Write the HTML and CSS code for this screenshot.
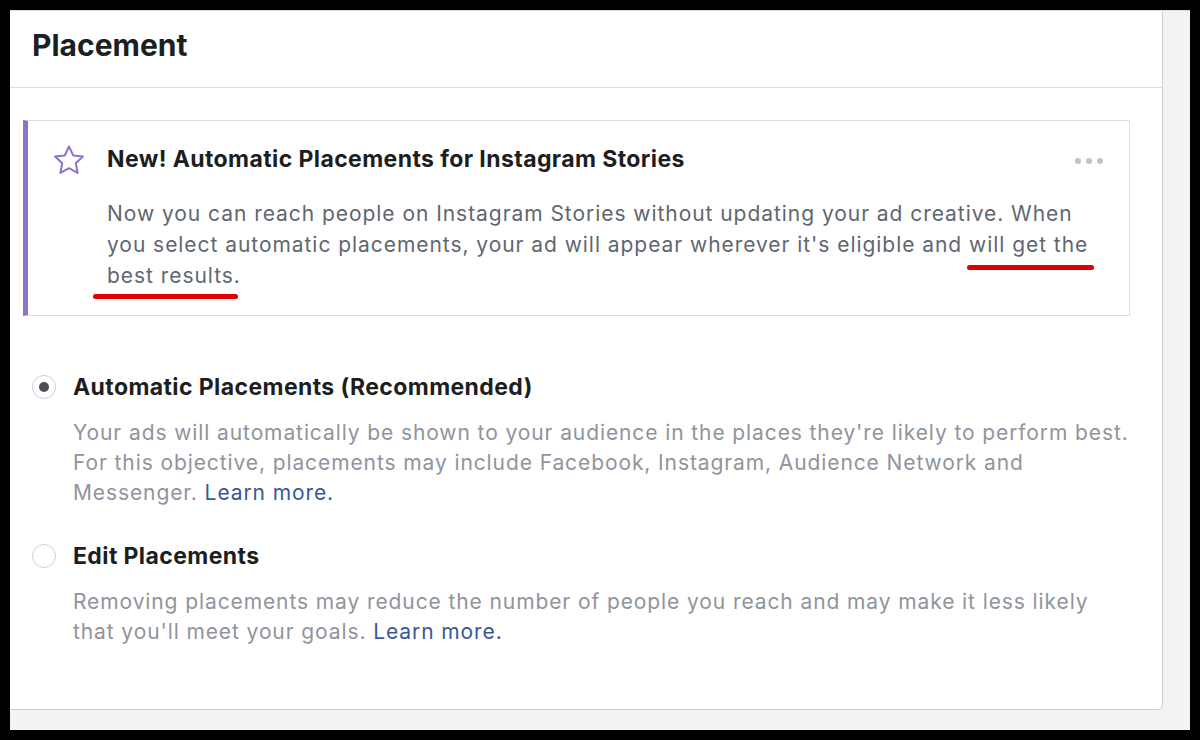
FILE: index.html
```html
<!DOCTYPE html>
<html lang="en">
<head>
    <meta charset="UTF-8">
    <title>Placement</title>
    <link rel="stylesheet" href="styles.css">
</head>
<body>
    <div class="frame">
        <div class="panel">
            <div class="header">
                <h1>Placement</h1>
            </div>

            <!-- Instagram Stories notice -->
            <div class="notice">
                <div class="notice-icon">
                    <svg width="34" height="32" viewBox="0 0 34 32">
                        <path d="M17 2.5 L21.2 11.4 L30.9 12.6 L23.8 19.3 L25.6 28.9 L17 24.2 L8.4 28.9 L10.2 19.3 L3.1 12.6 L12.8 11.4 Z" fill="none" stroke="#8c72cb" stroke-width="2" stroke-linejoin="round"/>
                    </svg>
                </div>
                <div class="notice-body">
                    <div class="notice-title">New! Automatic Placements for Instagram Stories</div>
                    <p class="notice-text">Now you can reach people on Instagram Stories without updating your ad creative. When you select automatic placements, your ad will appear wherever it's eligible and <span class="mark mark-a">will get the</span> <span class="mark mark-b">best results</span>.</p>
                </div>
                <div class="notice-more">
                    <span></span><span></span><span></span>
                </div>
            </div>

            <!-- Placement options -->
            <div class="options">
                <div class="option">
                    <div class="option-row">
                        <span class="radio checked"></span>
                        <span class="option-label">Automatic Placements (Recommended)</span>
                    </div>
                    <p class="option-desc">Your ads will automatically be shown to your audience in the places they're likely to perform best. For this objective, placements may include Facebook, Instagram, Audience Network and Messenger. <a href="#">Learn more.</a></p>
                </div>
                <div class="option">
                    <div class="option-row">
                        <span class="radio"></span>
                        <span class="option-label">Edit Placements</span>
                    </div>
                    <p class="option-desc">Removing placements may reduce the number of people you reach and may make it less likely that you'll meet your goals. <a href="#">Learn more.</a></p>
                </div>
            </div>
        </div>
    </div>
</body>
</html>
```

FILE: styles.css
```css
body {
    margin: 0;
    padding: 10px 10px 10px 10px;
    background-color: #000000;
    font-family: Inter, "Liberation Sans", Arial, sans-serif;
    color: #1c1e21;
}
.frame {
    width: 1180px;
    height: 720px;
    background-color: #f2f3f5;
    border-top: 1px solid #dadde1;
    box-sizing: border-box;
}
.panel {
    width: 1153px;
    height: 699px;
    background: #ffffff;
    border-right: 1px solid #ccd0d5;
    border-bottom: 1px solid #ccd0d5;
    border-bottom-right-radius: 5px;
    box-sizing: border-box;
}
.header {
    height: 77px;
    border-bottom: 1px solid #dadde1;
    padding-left: 22px;
    padding-bottom: 8px;
    box-sizing: border-box;
    display: flex;
    align-items: center;
}
h1 {
    margin: 0;
    font-size: 30px;
    font-weight: bold;
    color: #1c1e21;
}
.notice {
    margin: 32px 32px 0 13px;
    height: 196px;
    border: 1px solid #dadde1;
    border-left: 5px solid #8c72cb;
    box-sizing: border-box;
    display: flex;
    position: relative;
}
.notice-icon {
    padding: 23px 0 0 24px;
    width: 55px;
}
.notice-body {
    flex: 1;
    padding-top: 24px;
}
.notice-title {
    font-size: 23px;
    font-weight: bold;
    letter-spacing: 0.4px;
    line-height: 28px;
}
.notice-text {
    margin: 25px 0 0 0;
    font-size: 21px;
    letter-spacing: 0.95px;
    line-height: 31px;
    color: #606770;
    width: 995px;
}
.mark {
    position: relative;
}
.mark::after {
    content: "";
    position: absolute;
    height: 5px;
    border-radius: 3px;
    background: #e00000;
    bottom: -11px;
}
.mark-a::after {
    left: -2px;
    right: -6px;
    bottom: -13px;
}
.mark-b::after {
    left: -14px;
    right: -4px;
}
.notice-more {
    position: absolute;
    top: 37px;
    right: 26px;
    display: flex;
    gap: 5px;
}
.notice-more span {
    width: 6px;
    height: 6px;
    border-radius: 50%;
    background: #bec2c9;
}
.options {
    padding: 57px 0 0 22px;
}
.option {
    margin-bottom: 34px;
}
.option-row {
    display: flex;
    align-items: center;
    height: 28px;
}
.radio {
    width: 24px;
    height: 24px;
    border: 1px solid #ccd0d5;
    border-radius: 50%;
    box-sizing: border-box;
    margin-right: 17px;
    display: flex;
    align-items: center;
    justify-content: center;
}
.radio.checked::after {
    content: "";
    width: 10px;
    height: 10px;
    border-radius: 50%;
    background: #4b4f56;
}
.option-label {
    font-size: 23px;
    font-weight: bold;
    letter-spacing: 0.4px;
}
.option-desc {
    margin: 17px 0 0 41px;
    font-size: 21px;
    letter-spacing: 0.9px;
    line-height: 30px;
    color: #90949c;
    width: 1057px;
}
.option-desc a {
    color: #385898;
    text-decoration: none;
}
```
